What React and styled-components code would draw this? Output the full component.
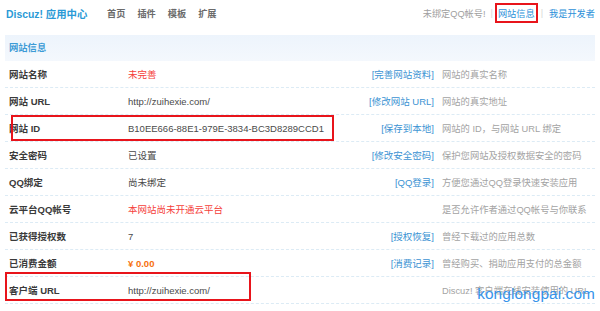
import React from "react";
import styled, { createGlobalStyle } from "styled-components";

const Global = createGlobalStyle`
  html, body { margin: 0; padding: 0; background: #fff; }
  body {
    font-family: "Liberation Sans", "Noto Sans CJK SC", sans-serif;
    font-size: 9.5px;
    color: #444;
  }
`;

const Page = styled.div`
  position: relative;
  width: 590px;
  height: 311px;
  padding: 0 5px;
  overflow: hidden;
`;

const TopBar = styled.div`
  display: flex;
  align-items: center;
  height: 26px;
  margin-bottom: 9px;
`;

const Logo = styled.div`
  font-size: 10.4px;
  font-weight: bold;
  color: #2a9ad6;
  padding-left: 1px;
  width: 101px;
  white-space: nowrap;
`;

const Nav = styled.nav`
  display: flex;
  gap: 12px;
`;

const NavItem = styled.span`
  color: #6b6b6b;
  font-weight: bold;
  font-size: 9.2px;
`;

const Right = styled.div`
  margin-left: auto;
  display: flex;
  align-items: center;
  font-size: 9.2px;
`;

const Muted = styled.span`
  color: #a0a0a0;
`;

const Sep = styled.span`
  color: #d6d6d6;
  margin: 0 ${(p) => p.$m || 5}px;
`;

const TopLink = styled.a`
  color: #2b90d9;
  text-decoration: none;
  ${(p) =>
    p.$marked &&
    `outline: 2px solid #e8141b; outline-offset: 1px;`}
`;

const SectionHead = styled.div`
  height: 26px;
  line-height: 26px;
  padding-left: 4px;
  background: linear-gradient(#edf4fc, #f4f8fd);
  color: #3d9bd6;
  font-weight: bold;
  font-size: 9.3px;
`;

const Row = styled.div`
  position: relative;
  display: grid;
  grid-template-columns: 123px 200px 106px 161px;
  align-items: center;
  height: 26px;
  border-bottom: 1px dashed #dcebf5;
`;

const Label = styled.div`
  padding-left: 4px;
  font-weight: bold;
  color: #3a3a3a;
  white-space: nowrap;
`;

const Value = styled.div`
  white-space: nowrap;
  color: ${(p) =>
    p.$tone === "red" ? "#f5403a" : p.$tone === "orange" ? "#f7700e" : "#4a4a4a"};
  font-weight: ${(p) => (p.$tone === "orange" ? "bold" : "normal")};
`;

const Action = styled.a`
  text-align: right;
  color: #3c93d3;
  white-space: nowrap;
  text-decoration: none;
`;

const Desc = styled.div`
  padding-left: 8px;
  color: #a3a3a3;
  white-space: nowrap;
  font-size: 9.3px;
`;

const Mark = styled.div`
  position: absolute;
  left: ${(p) => p.$l}px;
  top: ${(p) => p.$t}px;
  width: ${(p) => p.$w}px;
  height: ${(p) => p.$h}px;
  border: 2px solid #e8141b;
  box-sizing: border-box;
  pointer-events: none;
`;

const Watermark = styled.div`
  position: absolute;
  right: 5px;
  bottom: 9px;
  font-family: "Liberation Sans", sans-serif;
  font-size: 15.4px;
  line-height: 17px;
  color: #3593ea;
  letter-spacing: 0.1px;
`;

const rows = [
  { label: "网站名称", value: "未完善", tone: "red", action: "[完善网站资料]", desc: "网站的真实名称" },
  { label: "网站 URL", value: "http://zuihexie.com/", action: "[修改网站 URL]", desc: "网站的真实地址" },
  {
    label: "网站 ID",
    value: "B10EE666-88E1-979E-3834-BC3D8289CCD1",
    action: "[保存到本地]",
    desc: "网站的 ID，与网站 URL 绑定",
    mark: { l: 6, t: 0, w: 323, h: 26 },
  },
  { label: "安全密码", value: "已设置", action: "[修改安全密码]", desc: "保护您网站及授权数据安全的密码" },
  { label: "QQ绑定", value: "尚未绑定", action: "[QQ登录]", desc: "方便您通过QQ登录快速安装应用" },
  { label: "云平台QQ帐号", value: "本网站尚未开通云平台", tone: "red", action: "", desc: "是否允许作者通过QQ帐号与你联系" },
  { label: "已获得授权数", value: "7", action: "[授权恢复]", desc: "曾经下载过的应用总数" },
  { label: "已消费金额", value: "¥ 0.00", tone: "orange", action: "[消费记录]", desc: "曾经购买、捐助应用支付的总金额" },
  {
    label: "客户端 URL",
    value: "http://zuihexie.com/",
    action: "",
    desc: "Discuz! 客户端在线安装使用的 URL",
    mark: { l: 0, t: -5, w: 246, h: 29 },
  },
];

export default function App() {
  return (
    <>
      <Global />
      <Page>
        <TopBar>
          <Logo>Discuz! 应用中心</Logo>
          <Nav>
            <NavItem>首页</NavItem>
            <NavItem>插件</NavItem>
            <NavItem>模板</NavItem>
            <NavItem>扩展</NavItem>
          </Nav>
          <Right>
            <Muted>未绑定QQ帐号!</Muted>
            <Sep>|</Sep>
            <TopLink $marked>网站信息</TopLink>
            <Sep $m={6}>|</Sep>
            <TopLink>我是开发者</TopLink>
          </Right>
        </TopBar>
        <SectionHead>网站信息</SectionHead>
        {rows.map((r) => (
          <Row key={r.label}>
            <Label>{r.label}</Label>
            <Value $tone={r.tone}>{r.value}</Value>
            <Action>{r.action}</Action>
            <Desc>{r.desc}</Desc>
            {r.mark && <Mark $l={r.mark.l} $t={r.mark.t} $w={r.mark.w} $h={r.mark.h} />}
          </Row>
        ))}
        <Watermark>konglongpai.com</Watermark>
      </Page>
    </>
  );
}
